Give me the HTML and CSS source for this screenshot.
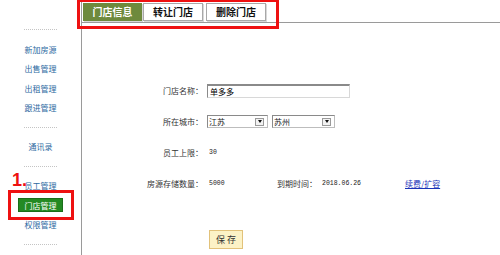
FILE: index.html
```html
<!DOCTYPE html>
<html lang="zh">
<head>
  <meta charset="UTF-8">
  <title>门店信息</title>
  <link rel="stylesheet" href="styles.css">
</head>
<body>
  <div class="page">
    <aside class="side">
      <div class="dots"></div>
      <a class="nav">新加房源</a>
      <a class="nav">出售管理</a>
      <a class="nav">出租管理</a>
      <a class="nav">跟进管理</a>
      <div class="dots"></div>
      <a class="nav">通讯录</a>
      <div class="dots"></div>
      <a class="nav">员工管理</a>
      <a class="nav"><span class="nav-on">门店管理</span></a>
      <a class="nav">权限管理</a>
      <div class="dots"></div>
    </aside>

    <main class="main">
      <nav class="tabs">
        <span class="tab tab-on">门店信息</span>
        <span class="tab">转让门店</span>
        <span class="tab">删除门店</span>
      </nav>

      <form class="store-form">
        <div class="row">
          <label class="lbl">门店名称：</label>
          <input class="txt" type="text" value="单多多">
        </div>
        <div class="row">
          <label class="lbl">所在城市：</label>
          <span class="sel sel-prov"><select><option>江苏</option></select><span class="arrow"></span></span>
          <span class="sel sel-city"><select><option>苏州</option></select><span class="arrow"></span></span>
        </div>
        <div class="row">
          <label class="lbl">员工上限：</label>
          <span class="num">30</span>
        </div>
        <div class="row">
          <label class="lbl">房源存储数量：</label>
          <span class="num num-short">5000</span>
          <label class="lbl2">到期时间：</label>
          <span class="num num-date">2018.06.26</span>
          <a class="link" href="#">续费/扩容</a>
        </div>
        <div class="row row-save">
          <span class="lbl"></span>
          <button class="save" type="button">保 存</button>
        </div>
      </form>
    </main>
  </div>

  <div class="mark mark-tabs"></div>
  <div class="mark mark-nav"></div>
  <span class="step">1.</span>
</body>
</html>
```

FILE: styles.css
```css
* {
  box-sizing: border-box;
}

body {
  margin: 0;
  width: 500px;
  height: 255px;
  overflow: hidden;
  background: #fff;
  font-family: "Noto Sans CJK SC", sans-serif;
  color: #222;
}

.page {
  display: flex;
  height: 255px;
}

/* sidebar */
.side {
  width: 82px;
  border-right: 1px solid #9a9a9a;
  padding-top: 20px;
  display: flex;
  flex-direction: column;
}

.nav, .dots {
  height: 19.5px;
  flex: none;
}

.nav {
  display: flex;
  align-items: center;
  justify-content: center;
  font-size: 8px;
  color: #2d6a9f;
}

.dots {
  position: relative;
  margin: 0 auto;
  width: 33px;
  display: flex;
  align-items: center;
}

.dots::before {
  content: "";
  width: 100%;
  border-top: 1px dotted #c4c4c4;
}

.nav-on {
  display: block;
  width: 45px;
  height: 14px;
  line-height: 13px;
  text-align: center;
  background: #238a23;
  border: 1px solid #1a6e1a;
  color: #fff;
}

/* main */
.main {
  flex: 1;
}

.tabs {
  display: flex;
  height: 23px;
  padding: 3px 0 1px 1px;
  border-bottom: 1px solid #9a9a9a;
}

.tab {
  width: 60px;
  height: 18px;
  line-height: 16px;
  margin-right: 3px;
  text-align: center;
  font-size: 10px;
  font-weight: 700;
  color: #111;
  background: #fff;
  border: 1px solid #a8a8a8;
  box-shadow: 1px 1px 0 #d8d8d8;
}

.tab-on {
  width: 59px;
  margin-right: 1px;
  background: #6e8a3d;
  border-color: #6e8a3d;
  color: #fff;
}

.store-form {
  padding: 52px 0 0 60px;
}

.row {
  display: flex;
  align-items: center;
  height: 31px;
  font-size: 8px;
}

.lbl {
  width: 61px;
  margin-right: 4px;
  text-align: right;
  color: #333;
}

.lbl2 {
  width: 43px;
  color: #333;
}

.txt {
  width: 143px;
  height: 14px;
  padding: 0 2px;
  font: 8px "Noto Sans CJK SC", sans-serif;
  border: 1px solid #d8d8d8;
  border-top: 2px solid #8a8a8a;
  border-left-color: #8a8a8a;
  outline: none;
}

.sel {
  display: flex;
  align-items: center;
  height: 13px;
  margin-right: 4px;
  border: 1px solid #8a8a8a;
  border-right-color: #bdbdbd;
  border-bottom-color: #bdbdbd;
}

.sel-prov {
  width: 61px;
}

.sel-city {
  width: 63px;
}

.sel select {
  appearance: none;
  flex: 1;
  min-width: 0;
  height: 11px;
  padding: 0 1px;
  border: 0;
  background: transparent;
  font: 8px/11px "Noto Sans CJK SC", sans-serif;
  color: #222;
}

.arrow {
  width: 9px;
  height: 8px;
  margin-right: 3px;
  border: 1px solid #9a9a9a;
  background: #f2f2f2;
  display: flex;
  align-items: center;
  justify-content: center;
}

.arrow::after {
  content: "";
  border-top: 3px solid #111;
  border-left: 2px solid transparent;
  border-right: 2px solid transparent;
}

.num {
  padding-left: 2px;
  font-family: "Liberation Mono", monospace;
  font-size: 6.5px;
  color: #222;
}

.num-short {
  width: 70px;
}

.num-date {
  width: 85px;
}

.link {
  font-size: 8px;
  color: #1a33b8;
}

.row-save {
  height: 20px;
  margin-top: 30px;
}

.save {
  margin-left: 2px;
  width: 34px;
  height: 19px;
  padding: 0;
  font: 9px "Noto Sans CJK SC", sans-serif;
  color: #333;
  background: #fcf2c6;
  border: 1px solid #e2c27a;
}

/* annotations */
.mark {
  position: absolute;
  border: 3px solid #e11;
}

.mark-tabs {
  left: 77px;
  top: -1px;
  width: 202px;
  height: 30px;
}

.mark-nav {
  left: 8px;
  top: 190px;
  width: 66px;
  height: 30px;
}

.step {
  position: absolute;
  left: 12px;
  top: 171px;
  font: 700 18px/1 "Liberation Sans", sans-serif;
  color: #e11;
}
```
